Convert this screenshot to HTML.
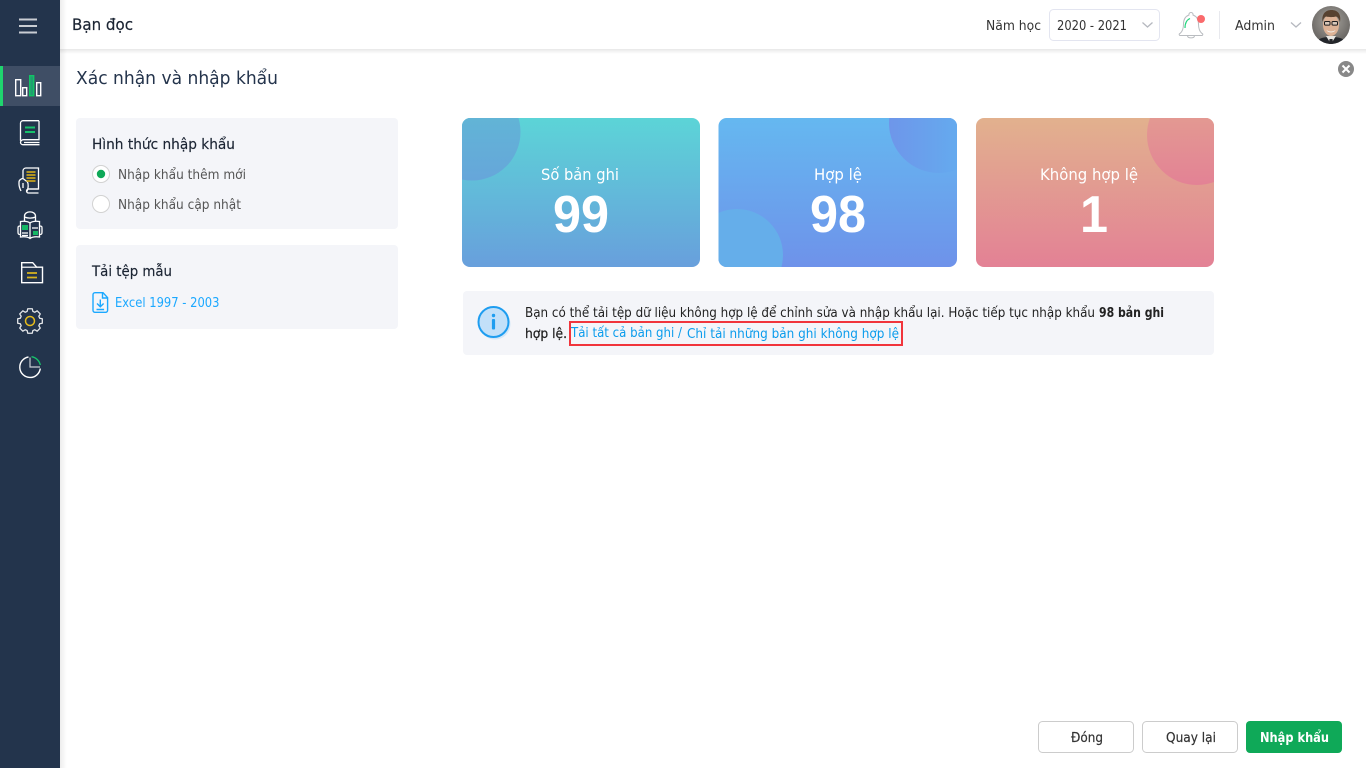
<!DOCTYPE html>
<html lang="vi"><head><meta charset="utf-8"><title>Bạn đọc</title>
<style>
html,body{margin:0;padding:0;width:1366px;height:768px;overflow:hidden;background:#fff}
svg{display:block}
text{font-family:"DejaVu Sans","Liberation Sans",sans-serif;white-space:pre}
text.n{font-family:"Liberation Sans",sans-serif}
</style></head><body>
<svg width="1366" height="768" viewBox="0 0 1366 768" xmlns="http://www.w3.org/2000/svg">
<defs>
<linearGradient id="g1" x1="0" y1="0" x2="0" y2="1"><stop offset="0" stop-color="#5cd4d7"/><stop offset="1" stop-color="#689fdc"/></linearGradient>
<linearGradient id="g1c" x1="0" y1="0" x2="0" y2="1"><stop offset="0" stop-color="#5fbcd4"/><stop offset="1" stop-color="#66a6da"/></linearGradient>
<linearGradient id="g2" x1="0" y1="0" x2="0" y2="1"><stop offset="0" stop-color="#65b8f0"/><stop offset="1" stop-color="#6e92ea"/></linearGradient>
<linearGradient id="g2c" x1="0" y1="0" x2="1" y2="0"><stop offset="0" stop-color="#6e96ea"/><stop offset=".65" stop-color="#65a9ee"/><stop offset="1" stop-color="#65a9ee"/></linearGradient>
<linearGradient id="g3" x1="0" y1="0" x2="0" y2="1"><stop offset="0" stop-color="#e2b18e"/><stop offset="1" stop-color="#e38195"/></linearGradient>
<linearGradient id="g3c" x1="0" y1="0" x2="0" y2="1"><stop offset="0" stop-color="#e3a490"/><stop offset="1" stop-color="#e38295"/></linearGradient>
<linearGradient id="sb" x1="0" y1="0" x2="1" y2="0"><stop offset="0" stop-color="#000" stop-opacity=".07"/><stop offset="1" stop-color="#000" stop-opacity="0"/></linearGradient>
<linearGradient id="hd" x1="0" y1="0" x2="0" y2="1"><stop offset="0" stop-color="#000" stop-opacity=".09"/><stop offset="1" stop-color="#000" stop-opacity="0"/></linearGradient>
<clipPath id="c1"><rect x="462" y="118" width="238" height="149" rx="8"/></clipPath>
<clipPath id="c2"><rect x="718.500" y="118" width="238.500" height="149" rx="8"/></clipPath>
<clipPath id="c3"><rect x="976" y="118" width="238" height="149" rx="8"/></clipPath>
<clipPath id="av"><circle cx="1331" cy="25" r="19"/></clipPath>
<radialGradient id="avb" cx=".5" cy=".4" r=".6"><stop offset="0" stop-color="#a9a6a0"/><stop offset="1" stop-color="#666360"/></radialGradient>
</defs>

<!-- header -->
<rect x="60" y="49" width="1306" height="5" fill="url(#hd)"/>
<rect x="60" y="0" width="1306" height="49" fill="#fff"/>
<text x="72" y="30" font-size="16" fill="#1b2433" stroke="#1b2433" stroke-width=".2" textLength="61" lengthAdjust="spacingAndGlyphs">Bạn đọc</text>
<text x="986" y="30" font-size="13" fill="#333" textLength="55" lengthAdjust="spacingAndGlyphs">Năm học</text>
<rect x="1049.500" y="9.500" width="110" height="31" rx="4" fill="#fff" stroke="#e3e5f0"/>
<text x="1057" y="30" font-size="13" fill="#333" textLength="70" lengthAdjust="spacingAndGlyphs">2020 - 2021</text>
<path d="M1142.500 22.500l5 4.500 5-4.500" fill="none" stroke="#b5b8bf" stroke-width="1.300"/>
<!-- bell -->
<g fill="none" stroke="#b9bcc0" stroke-width="1">
<path d="M1191 12.500a2 2 0 0 1 2 2.500c4 1.500 5.500 5 5.500 9 0 5 1 7.500 3.500 9.500a1 1 0 0 1-.5 2h-21a1 1 0 0 1-.5-2c2.500-2 3.500-4.500 3.500-9.500 0-4 1.500-7.500 5.500-9a2 2 0 0 1 2-2.500z"/>
<path d="M1187.500 36c.5 2.500 6.500 2.500 7 0"/>
</g>
<path d="M1185 28c0-5 1.500-8 5-9.500" fill="none" stroke="#22d47d" stroke-width="1.200"/>
<circle cx="1201" cy="19" r="4" fill="#fa6a6c"/>
<rect x="1219" y="11" width="1" height="28" fill="#e8e9ee"/>
<text x="1235" y="30" font-size="13" fill="#333" textLength="40" lengthAdjust="spacingAndGlyphs">Admin</text>
<path d="M1291 22.500l5 4.500 5-4.500" fill="none" stroke="#b5b8bf" stroke-width="1.300"/>
<!-- avatar -->
<g clip-path="url(#av)">
<rect x="1312" y="6" width="38" height="38" fill="url(#avb)"/>
<path d="M1316 44c1-6 8-7 15-7s14 1 15 7z" fill="#23262b"/>
<path d="M1326 36l5 8 5-8z" fill="#e8e6e2"/>
<path d="M1329.500 39h3l.7 5h-4.400z" fill="#25272c"/>
<ellipse cx="1331" cy="25" rx="8" ry="11" fill="#dcb296"/>
<path d="M1322.500 22c-1-8 3-12 9-12s10 4 8.500 12c-1-3-2-5-4-5.500-3 .8-7 .8-10 0-2 1-3 3-3.500 5.500z" fill="#574230"/>
<rect x="1324.500" y="21.500" width="5.500" height="3.600" rx="1" fill="#d8c8ba" stroke="#1d1d1f" stroke-width="1"/>
<rect x="1332" y="21.500" width="5.500" height="3.600" rx="1" fill="#d8c8ba" stroke="#1d1d1f" stroke-width="1"/>
<path d="M1326.500 30c2.500 2 6.500 2 9 0-1 3.200-8 3.200-9 0z" fill="#f4f2ee"/>
</g>

<!-- sidebar -->
<rect x="60" y="0" width="7" height="768" fill="url(#sb)"/>
<rect x="0" y="0" width="60" height="768" fill="#23344c"/>
<path d="M19 19.500h18M19 26h18M19 32.500h18" stroke="#c9cdd3" stroke-width="2"/>
<rect x="3" y="66" width="57" height="40" fill="#3f4e65"/>
<rect x="0" y="66" width="3" height="40" fill="#1fd56e"/>
<g fill="none" stroke="#fff" stroke-width="1.400">
<rect x="15.700" y="79.700" width="5" height="16"/>
<rect x="22.700" y="87.700" width="4" height="8"/>
<rect x="36.700" y="82.700" width="4" height="13"/>
</g>
<rect x="29.700" y="75.700" width="4" height="20" fill="#1f9e70" stroke="#12c465" stroke-width="1.400"/>
<!-- book -->
<g fill="none" stroke="#fff" stroke-width="1.300">
<path d="M39 120.700h-16a2.500 2.500 0 0 0-2.500 2.500v17.500"/>
<path d="M39 120.700v19h-15.500a3 3 0 0 0-3 2.500 2.500 2.500 0 0 0 2.500 2.500h16.500"/>
<path d="M24 142.500h15.500"/>
</g>
<path d="M25 127.500h10M25 132h10" stroke="#16c26a" stroke-width="2"/>
<!-- book in hand -->
<g fill="none" stroke="#fff" stroke-width="1.300">
<path d="M23 178v-7.500a3 3 0 0 1 3-2.500h12.500v21h-11"/>
<path d="M38.500 189h-10a2 2 0 0 0 0 4h10"/>
<path d="M21 191c-1-2-2-4-2-7v-2c0-2 2.500-3.500 4-3.500l4.500 3.500c1 2 1 6-.5 9.500"/>
<path d="M23 183v5"/>
</g>
<path d="M26.500 172h9M26.500 175h9M26.500 178h9M26.500 181h9" stroke="#c7a21d" stroke-width="1.700"/>
<!-- reader -->
<g fill="none" stroke="#fff" stroke-width="1.300">
<path d="M24.500 221v-5c0-5.500 11-5.500 11 0v5"/>
<path d="M24.500 217c3 1.500 8 1.500 11 0"/>
<path d="M30 223c-2-1.500-6-2-9.500-1.500v15.500c3.500-.5 7.500 0 9.500 1.500 2-1.500 6-2 9.500-1.500v-15.500c-3.500-.5-7.500 0-9.500 1.500zM30 223v15"/>
<path d="M20 226c-2 0-2 .5-2 3v2.500c0 2 0 3 2 3M40 226c2 0 2 .5 2 3v2.500c0 2 0 3-2 3"/>
<path d="M32 228h6M22 233h6M22 235.500h6"/>
</g>
<rect x="22" y="225" width="6" height="5" fill="#16b765"/>
<rect x="33" y="231" width="5" height="4" fill="#16b765"/>
<!-- folder -->
<path d="M21.700 282.700v-20h11l4 4.500h5.800v15.500z" fill="none" stroke="#fff" stroke-width="1.400"/>
<path d="M22 267.200h15" stroke="#fff" stroke-width="1.200"/>
<path d="M27 273h10M27 277.500h10" stroke="#d8b41f" stroke-width="1.800"/>
<!-- gear -->
<path transform="translate(30 321) scale(.755) translate(-30 -325.7)" d="M27 309.500h6l.8 3.500 2.600 1.100 3.100-1.900 4.100 4.100-1.900 3.100 1.100 2.600 3.500.8v5.800l-3.500.8-1.100 2.600 1.900 3.100-4.100 4.100-3.100-1.900-2.600 1.100-.8 3.500h-6l-.8-3.500-2.600-1.100-3.100 1.900-4.100-4.100 1.900-3.100-1.100-2.600-3.500-.8v-5.800l3.500-.8 1.100-2.600-1.900-3.100 4.100-4.100 3.100 1.900 2.600-1.100z" fill="none" stroke="#e6e8eb" stroke-width="1.700" stroke-linejoin="round"/>
<circle cx="30" cy="321" r="4.500" fill="none" stroke="#e5bb1c" stroke-width="1.500"/>
<!-- pie -->
<path d="M28.500 357a10.300 10.300 0 1 0 11.800 11.500" fill="none" stroke="#fff" stroke-width="1.400"/>
<path d="M30 357.500v9.500h10" fill="none" stroke="#c9cdd3" stroke-width="1.200"/>
<path d="M31.500 356.700a10.500 10.500 0 0 1 8.800 8.300" fill="none" stroke="#16c26a" stroke-width="1.400"/>

<!-- page title -->
<text x="76" y="84" font-size="18" fill="#24344c" textLength="202" lengthAdjust="spacingAndGlyphs">Xác nhận và nhập khẩu</text>
<circle cx="1346" cy="69" r="8" fill="#888"/>
<path d="M1342.500 65.500l7 7M1349.500 65.500l-7 7" stroke="#fff" stroke-width="2"/>

<!-- left panels -->
<rect x="76" y="118" width="322" height="111" rx="4" fill="#f4f5f9"/>
<text x="92" y="149" font-size="14" fill="#1b2433" stroke="#1b2433" stroke-width=".15" textLength="143" lengthAdjust="spacingAndGlyphs">Hình thức nhập khẩu</text>
<circle cx="101" cy="174" r="8.500" fill="#fff" stroke="#d2d2d2"/>
<circle cx="101" cy="174" r="4.200" fill="#0fa958"/>
<text x="118" y="179" font-size="13" fill="#555" textLength="128" lengthAdjust="spacingAndGlyphs">Nhập khẩu thêm mới</text>
<circle cx="101" cy="204" r="8.500" fill="#fff" stroke="#d2d2d2"/>
<text x="118" y="209" font-size="13" fill="#555" textLength="123" lengthAdjust="spacingAndGlyphs">Nhập khẩu cập nhật</text>
<rect x="76" y="245" width="322" height="84" rx="4" fill="#f4f5f9"/>
<text x="92" y="276" font-size="14" fill="#1b2433" stroke="#1b2433" stroke-width=".15" textLength="80" lengthAdjust="spacingAndGlyphs">Tải tệp mẫu</text>
<g fill="none" stroke="#1ba8ff" stroke-width="1.400">
<path d="M103 292.700h-8a2 2 0 0 0-2 2v15.600a2 2 0 0 0 2 2h10.600a2 2 0 0 0 2-2v-12.600z"/>
<path d="M102.500 293v5h5"/>
<path d="M100.300 299.500v7M97 303.500l3.300 3.300 3.300-3.300M96.500 309.500h7.600"/>
</g>
<text x="115" y="307" font-size="13" fill="#1ba8ff" textLength="104.500" lengthAdjust="spacingAndGlyphs">Excel 1997 - 2003</text>

<!-- cards -->
<g clip-path="url(#c1)">
<rect x="462" y="118" width="238" height="149" fill="url(#g1)"/>
<circle cx="472" cy="132" r="48.500" fill="url(#g1c)"/>
</g>
<text x="541" y="180" font-size="16" fill="#fff" textLength="78" lengthAdjust="spacingAndGlyphs">Số bản ghi</text>
<text class="n" x="553" y="232" font-size="52" font-weight="700" fill="#fff" textLength="56" lengthAdjust="spacingAndGlyphs">99</text>
<g clip-path="url(#c2)">
<rect x="718.500" y="118" width="238.500" height="149" fill="url(#g2)"/>
<circle cx="939" cy="123" r="50" fill="url(#g2c)"/>
<circle cx="737" cy="255" r="46" fill="#65aeea"/>
</g>
<text x="814" y="180" font-size="16" fill="#fff" textLength="48" lengthAdjust="spacingAndGlyphs">Hợp lệ</text>
<text class="n" x="810" y="232" font-size="52" font-weight="700" fill="#fff" textLength="56" lengthAdjust="spacingAndGlyphs">98</text>
<g clip-path="url(#c3)">
<rect x="976" y="118" width="238" height="149" fill="url(#g3)"/>
<circle cx="1197" cy="135" r="50" fill="url(#g3c)"/>
</g>
<text x="1040" y="180" font-size="16" fill="#fff" textLength="98" lengthAdjust="spacingAndGlyphs">Không hợp lệ</text>
<text class="n" x="1080" y="232" font-size="52" font-weight="700" fill="#fff" textLength="28" lengthAdjust="spacingAndGlyphs">1</text>

<!-- info -->
<rect x="463" y="291" width="751" height="64" rx="4" fill="#f4f5f9"/>
<circle cx="495" cy="324" r="15.500" fill="#d3e7f8"/>
<circle cx="493.500" cy="322" r="15" fill="#c2e0f9" stroke="#1e9df0" stroke-width="2"/>
<circle cx="493.500" cy="315.500" r="1.700" fill="#1e9df0"/>
<rect x="491.900" y="319" width="3.200" height="10.500" rx="1" fill="#1e9df0"/>
<text x="525" y="317" font-size="13" fill="#222" textLength="570" lengthAdjust="spacingAndGlyphs">Bạn có thể tải tệp dữ liệu không hợp lệ để chỉnh sửa và nhập khẩu lại. Hoặc tiếp tục nhập khẩu</text>
<text x="1099" y="317" font-size="13" fill="#222" font-weight="700" textLength="65" lengthAdjust="spacingAndGlyphs">98 bản ghi</text>
<text x="525" y="338" font-size="13" fill="#222" stroke="#222" stroke-width=".25" textLength="42" lengthAdjust="spacingAndGlyphs">hợp lệ.</text>
<rect x="570" y="322" width="332" height="23" fill="none" stroke="#f1353c" stroke-width="2"/>
<text x="571" y="337" font-size="13" fill="#0b9cec" textLength="111" lengthAdjust="spacingAndGlyphs">Tải tất cả bản ghi /</text>
<text x="687" y="338" font-size="13" fill="#0b9cec" textLength="212" lengthAdjust="spacingAndGlyphs">Chỉ tải những bản ghi không hợp lệ</text>

<!-- buttons -->
<rect x="1038.500" y="721.500" width="95" height="31" rx="4" fill="#fff" stroke="#ccc"/>
<text x="1071" y="742" font-size="13" fill="#333" stroke="#333" stroke-width=".2" textLength="32" lengthAdjust="spacingAndGlyphs">Đóng</text>
<rect x="1142.500" y="721.500" width="95" height="31" rx="4" fill="#fff" stroke="#ccc"/>
<text x="1166" y="742" font-size="13" fill="#333" stroke="#333" stroke-width=".2" textLength="50" lengthAdjust="spacingAndGlyphs">Quay lại</text>
<rect x="1246" y="721" width="96" height="32" rx="4" fill="#0fa958"/>
<text x="1260" y="742" font-size="13" fill="#fff" font-weight="700" textLength="69" lengthAdjust="spacingAndGlyphs">Nhập khẩu</text>
</svg>
</body></html>
